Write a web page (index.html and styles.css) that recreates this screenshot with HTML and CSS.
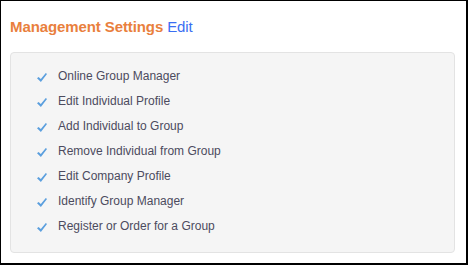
FILE: index.html
```html
<!DOCTYPE html>
<html lang="en">
<head>
  <meta charset="UTF-8">
  <title>Management Settings</title>
  <link rel="stylesheet" href="styles.css">
</head>
<body>
  <div class="frame">
    <h2 class="title">Management Settings <a href="#" class="edit">Edit</a></h2>
    <div class="panel">
      <ul class="perms">
        <li><svg class="check" viewBox="0 0 10 9"><path d="M0 5.2 L1.6 4 L3.8 6 L8.8 0 L10 1 L3.9 9 Z"/></svg>Online Group Manager</li>
        <li><svg class="check" viewBox="0 0 10 9"><path d="M0 5.2 L1.6 4 L3.8 6 L8.8 0 L10 1 L3.9 9 Z"/></svg>Edit Individual Profile</li>
        <li><svg class="check" viewBox="0 0 10 9"><path d="M0 5.2 L1.6 4 L3.8 6 L8.8 0 L10 1 L3.9 9 Z"/></svg>Add Individual to Group</li>
        <li><svg class="check" viewBox="0 0 10 9"><path d="M0 5.2 L1.6 4 L3.8 6 L8.8 0 L10 1 L3.9 9 Z"/></svg>Remove Individual from Group</li>
        <li><svg class="check" viewBox="0 0 10 9"><path d="M0 5.2 L1.6 4 L3.8 6 L8.8 0 L10 1 L3.9 9 Z"/></svg>Edit Company Profile</li>
        <li><svg class="check" viewBox="0 0 10 9"><path d="M0 5.2 L1.6 4 L3.8 6 L8.8 0 L10 1 L3.9 9 Z"/></svg>Identify Group Manager</li>
        <li><svg class="check" viewBox="0 0 10 9"><path d="M0 5.2 L1.6 4 L3.8 6 L8.8 0 L10 1 L3.9 9 Z"/></svg>Register or Order for a Group</li>
      </ul>
    </div>
  </div>
</body>
</html>
```

FILE: styles.css
```css
body {
  margin: 0;
  background: #ffffff;
  font-family: "Liberation Sans", Arial, sans-serif;
}

.frame {
  box-sizing: border-box;
  width: 468px;
  height: 265px;
  border: 1px solid #000000;
  border-right-width: 2px;
  border-bottom-width: 2px;
  padding: 17px 11px 0 9px;
}

.title {
  margin: 0 0 17px 0;
  font-size: 15px;
  line-height: 17px;
  font-weight: bold;
  color: #e9803d;
  letter-spacing: -0.1px;
}

.edit {
  font-weight: normal;
  color: #3a6ef2;
  text-decoration: none;
}

.panel {
  background-color: #f5f5f5;
  border: 1px solid #e3e3e3;
  border-radius: 4px;
  padding: 10px 0 14px 0;
}

.perms {
  list-style: none;
  margin: 0;
  padding: 0 0 0 26px;
}

.perms li {
  display: flex;
  align-items: center;
  height: 25px;
  font-size: 12px;
  color: #4c4b5e;
}

.check {
  width: 10px;
  height: 9px;
  margin: 3px 11px 0 0;
  fill: #5b9fde;
}
```
